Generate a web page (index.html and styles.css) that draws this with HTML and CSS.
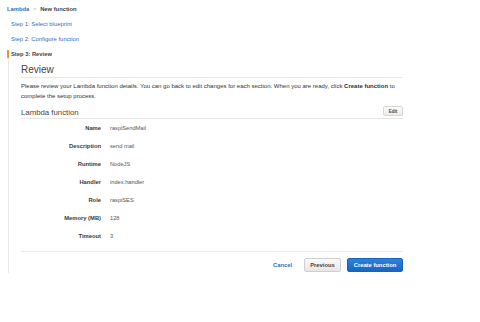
FILE: index.html
```html
<!DOCTYPE html>
<html lang="en">
<head>
    <meta charset="UTF-8">
    <title>Lambda - New function</title>
    <link rel="stylesheet" href="styles.css">
</head>
<body>
    <div class="breadcrumb">
        <a class="crumb-link" href="#">Lambda</a>
        <span class="crumb-sep">&gt;</span>
        <span class="crumb-current">New function</span>
    </div>

    <ul class="steps">
        <li class="step"><a href="#">Step 1: Select blueprint</a></li>
        <li class="step"><a href="#">Step 2: Configure function</a></li>
        <li class="step active">Step 3: Review</li>
    </ul>

    <div class="panel">
        <h2 class="panel-title">Review</h2>
        <p class="intro">Please review your Lambda function details. You can go back to edit changes for each section. When you are ready, click <b>Create function</b> to complete the setup process.</p>

        <div class="section-head">
            <h3>Lambda function</h3>
            <button class="edit-button">Edit</button>
        </div>

        <div class="details">
            <div class="label">Name</div><div class="value">raspiSendMail</div>
            <div class="label">Description</div><div class="value">send mail</div>
            <div class="label">Runtime</div><div class="value">NodeJS</div>
            <div class="label">Handler</div><div class="value">index.handler</div>
            <div class="label">Role</div><div class="value">raspiSES</div>
            <div class="label">Memory (MB)</div><div class="value">128</div>
            <div class="label">Timeout</div><div class="value">3</div>
        </div>

        <div class="actions">
            <a class="cancel" href="#">Cancel</a>
            <button class="btn">Previous</button>
            <button class="btn primary">Create function</button>
        </div>
    </div>
</body>
</html>
```

FILE: styles.css
```css
* {
    margin: 0;
    padding: 0;
    box-sizing: border-box;
}

body {
    font-family: 'Liberation Sans', Arial, sans-serif;
    background: #fff;
    color: #333;
    width: 480px;
    height: 322px;
}

a {
    color: #2f70b9;
    text-decoration: none;
}

.breadcrumb {
    padding: 5px 0 0 7px;
    font-size: 5.8px;
    line-height: 8px;
    font-weight: bold;
    display: flex;
    align-items: baseline;
    gap: 4px;
}

.crumb-sep {
    color: #999;
    font-weight: normal;
    font-size: 5px;
}

.crumb-current {
    color: #444;
}

.steps {
    list-style: none;
    margin-top: 7px;
}

.step {
    font-size: 5.9px;
    line-height: 8px;
    padding-left: 11px;
    margin-bottom: 7px;
}

.step.active {
    font-size: 5.8px;
    font-weight: bold;
    color: #444;
    border-left: 2px solid #f0932c;
    margin-left: 7px;
    padding-left: 2px;
    margin-bottom: 0;
}

.panel {
    margin-left: 8px;
    width: 395px;
    border-left: 1px solid #e8e8e8;
    padding: 6px 0 1px 12px;
}

.panel-title {
    font-size: 10px;
    line-height: 12px;
    font-weight: normal;
    color: #444;
    padding-bottom: 1px;
    border-bottom: 1px solid #e6e6e6;
}

.intro {
    font-size: 6px;
    line-height: 10px;
    color: #333;
    margin-top: 3px;
}

.section-head {
    display: flex;
    justify-content: space-between;
    align-items: flex-end;
    margin-top: 5px;
    padding-bottom: 2px;
    border-bottom: 1px solid #e6e6e6;
}

.section-head h3 {
    font-size: 7.8px;
    line-height: 10px;
    font-weight: normal;
    color: #444;
    margin-bottom: -2px;
}

.edit-button {
    font-family: inherit;
    font-size: 4.5px;
    font-weight: bold;
    color: #444;
    width: 20px;
    height: 10px;
    background: linear-gradient(#fbfbfb, #ececec);
    border: 1px solid #d6d6d6;
    border-radius: 2px;
}

.details {
    display: grid;
    grid-template-columns: 80px 1fr;
    column-gap: 9px;
    line-height: 18px;
}

.label {
    font-size: 5.8px;
    text-align: right;
    font-weight: bold;
    color: #3a3a3a;
}

.value {
    font-size: 5.7px;
    color: #555;
}

.actions {
    display: flex;
    justify-content: flex-end;
    align-items: center;
    margin-top: 6px;
    padding-top: 6px;
    border-top: 1px solid #ececec;
}

.cancel {
    font-size: 5.8px;
    font-weight: bold;
    margin-right: 6px;
}

.btn {
    font-family: inherit;
    font-size: 5.8px;
    font-weight: bold;
    color: #444;
    height: 14px;
    width: 37px;
    background: linear-gradient(#fafafa, #e6e6e6);
    border: 1px solid #cfcfcf;
    border-radius: 2px;
    margin-left: 6px;
}

.btn.primary {
    width: 56px;
    color: #fff;
    background: linear-gradient(#2d82de, #1866c4);
    border-color: #1a62b8;
}
```
